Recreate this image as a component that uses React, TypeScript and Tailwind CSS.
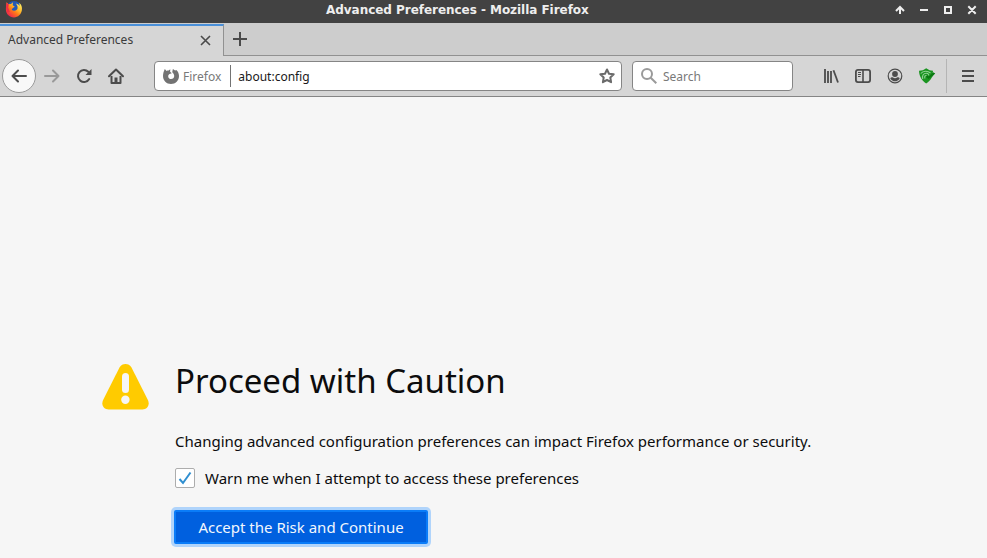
import type { ReactNode } from 'react';

function FirefoxLogo() {
  return (
    <svg width="18" height="18" viewBox="0 0 18 18">
      <defs>
        <linearGradient id="flame" x1="0.9" y1="0.05" x2="0.15" y2="0.9">
          <stop offset="0" stopColor="#fff36a" />
          <stop offset="0.35" stopColor="#ffbd2e" />
          <stop offset="0.6" stopColor="#ff7a18" />
          <stop offset="1" stopColor="#f0204f" />
        </linearGradient>
      </defs>
      <circle cx="9" cy="8.2" r="7.2" fill="#2458b8" />
      <path d="M1.6 2.2 3.8 4.4C4.6 3.9 5.3 3.9 6 4L7.9 2.3 7.7 5.3 9.8 6.8 7.8 8 6.7 9.8C8 11.2 10.3 11.2 12 9.6 13.3 7.7 12.5 5.2 10.8 3.4 13 3.8 14 4.8 14.7 6L14.2 2.8C16.5 4.8 17.3 7.3 16.9 10 16.3 14.4 13 17.4 9 17.4 4.2 17.4.9 13.6.9 9.4.8 6.6 1.6 5.3 1.6 2.2Z" fill="url(#flame)" />
      <path d="M1.6 2.4 3.8 4.5 3.2 7.7 4.8 11.9 2.5 12.5C.5 9.2.9 5.4 1.6 2.4Z" fill="#ef2d45" />
    </svg>
  );
}

function TitleBar() {
  return (
    <header className="relative flex h-[23px] shrink-0 items-start justify-between bg-[#424242] pl-[5px] pr-[10px]">
      <FirefoxLogo />
      <h1 className="absolute inset-x-0 top-px pl-[326px] text-[12px] leading-[19px] font-bold tracking-[-0.04px] whitespace-nowrap text-[#eeeeee] [font-family:'DejaVu_Sans',sans-serif]">
        Advanced Preferences - Mozilla Firefox
      </h1>
      <svg className="mt-[5px]" width="82" height="10" viewBox="0 0 82 10" fill="none" stroke="#eeeeee" strokeWidth="2">
        <path d="M5 9V2M1 6 5 2 9 6" />
        <path d="M25 5H33M50 2H56V8H50ZM73.3 1.3 80.7 8.7M80.7 1.3 73.3 8.7" />
      </svg>
    </header>
  );
}

function TabStrip() {
  return (
    <div className="flex h-[33px] shrink-0 bg-[#cdcdcd]">
      <div className="mt-px flex w-[224px] items-center justify-between border-t-2 border-r border-t-[#4a90d9] border-r-[#919191] bg-[#d6d6d6] pr-[12px] pb-[2px] pl-2">
        <span className="text-[12px] leading-4 text-[#3b3b3b]">Advanced Preferences</span>
        <svg width="11" height="11" viewBox="0 0 11 11" stroke="#4a4a4a" strokeWidth="1.6">
          <path d="M1 1 10 10M10 1 1 10" />
        </svg>
      </div>
      <div className="flex flex-1 items-start border-b border-[#919191] pt-[9px] pl-[9px]">
        <svg width="14" height="14" viewBox="0 0 14 14" stroke="#4a4a4a" strokeWidth="2">
          <path d="M7 0V14M0 7H14" />
        </svg>
      </div>
    </div>
  );
}

function Glyph({ children, color = '#4c4c4c' }: { children: ReactNode; color?: string }) {
  return (
    <svg width="16" height="16" viewBox="0 0 16 16" fill="none" stroke={color} strokeWidth="2" className="shrink-0 overflow-visible">
      {children}
    </svg>
  );
}

function Toolbar() {
  return (
    <div className="flex h-[41px] shrink-0 items-center border-b border-[#858585] bg-[#d6d6d6] pl-[2px]">
      <button className="flex size-[34px] shrink-0 items-center justify-center rounded-full border border-[#9a9a9a] bg-[#f8f8f8]">
        <Glyph><path d="M15 8H1.5M7 2.5 1.5 8 7 13.5" strokeLinecap="round" strokeLinejoin="round" /></Glyph>
      </button>
      <div className="ml-2 flex gap-4">
        <Glyph color="#999999"><path d="M1 8H14.5M9 2.5 14.5 8 9 13.5" strokeLinecap="round" strokeLinejoin="round" /></Glyph>
        <Glyph>
          <path d="M13.2 11A6 6 0 1 1 12.3 3.8" strokeLinecap="round" />
          <path d="M15.5 1V7H9.5Z" fill="#4c4c4c" stroke="none" />
        </Glyph>
        <Glyph>
          <path d="M1 8.3 8 1.5 15 8.3" strokeLinecap="round" strokeLinejoin="round" />
          <path d="M3.5 8V15H12.5V8" strokeLinejoin="round" />
          <path d="M8 15V9.5" strokeWidth="3" />
        </Glyph>
      </div>
      <div className="ml-[30px] flex h-[30px] w-[468px] shrink-0 items-center rounded-[4px] border border-[#858585] bg-white pr-[6px] pl-2 text-[12px]">
        <svg width="16" height="16" viewBox="0 0 16 16" fill="#737373">
          <path fillRule="evenodd" d="M1.8.9 3.6 2.9C4.2 2.5 5 2.4 5.6 2.5L7.3 1.2 7.1 3.7 8.8 5.2 6.5 6.1C5.7 6.5 5.2 7.4 5.2 8.2 5.2 9.9 6.5 11.1 8.1 11.1 9.9 11.1 11.2 9.8 11.2 8 11.2 6.4 10.4 5.2 9.2 4.2L9.9.9 12.1 2.5 13.3 1.9C15.2 3.4 16 5.8 16 8 16 12.5 12.5 16 8 16 3.5 16 0 12.5 0 8 0 5.2.8 3.2 1.8.9Z" />
        </svg>
        <span className="ml-1 pt-[2px] text-[#797979]">Firefox</span>
        <span className="ml-[9px] h-[22px] w-px bg-[#737373]" />
        <span className="ml-[7px] flex-1 pt-[2px] text-[#191919]">about:config</span>
        <Glyph color="#6b6b6b"><path d="M8 1.5 10 5.7 14.7 6.3 11.3 9.5 12.1 14.2 8 12 3.9 14.2 4.7 9.5 1.3 6.3 6 5.7Z" strokeLinejoin="round" /></Glyph>
      </div>
      <div className="ml-[10px] flex h-[30px] w-[161px] shrink-0 items-center rounded-[4px] border border-[#858585] bg-white pl-2 text-[12px] text-[#797979]">
        <Glyph color="#9a9a9a"><circle cx="6" cy="6" r="5" /><path d="M9.7 9.7 15.3 15.3" /></Glyph>
        <span className="ml-[6px] pt-[2px]">Search</span>
      </div>
      <div className="ml-[30px] flex gap-4">
        <Glyph>
          <path d="M2 1V15M5 3V15M8 3V15" strokeWidth="1.8" />
          <path d="M10.5 2.3 15 14.5" strokeWidth="1.8" />
        </Glyph>
        <Glyph>
          <rect x=".9" y="1.9" width="14.2" height="12.2" rx="2" strokeWidth="1.8" />
          <path d="M8 2V14" strokeWidth="1.6" />
          <path d="M3 4.5H6M3 6.5H6M3 8.5H5.5" strokeWidth="1" />
        </Glyph>
        <Glyph>
          <circle cx="8" cy="8" r="6.8" strokeWidth="1.2" />
          <g fill="#4c4c4c" stroke="none"><circle cx="8" cy="6" r="2.9" /><path d="M3.3 10.5C4.3 8.9 5.5 9.4 6 9.5 7.2 10.4 8.8 10.4 10 9.5 10.5 9.4 11.7 8.9 12.7 10.5 11.5 12.4 9.9 13.3 8 13.3S4.5 12.4 3.3 10.5Z" /></g>
        </Glyph>
        <Glyph>
          <path d="M0 2.8C3 2.8 5 2 7.2.3 9.5 2 11.6 2.8 14 2.8L13.8 5 16.2 5 12.8 9.6C11.6 12 9.6 14 7.2 15.5 3.3 12.8.2 9 0 2.8Z" fill="#1a9420" stroke="none" />
          <path d="M1.8 5.5C4.2 2.7 8.5 2.4 11.5 5M3.8 11C2.7 7.5 4.6 5.2 7.4 5.3 9.2 5.5 10 6.6 9.8 7.5M6 10.5C5.2 8.3 6 7.4 7.6 7.6" stroke="#8fd192" strokeWidth="1.1" />
          <path d="M7.5 8 9.6 9.7 15.3 5" stroke="#0b7812" strokeWidth="2" />
        </Glyph>
      </div>
      <div className="ml-[11px] h-[34px] w-px shrink-0 bg-[#b5b5b5]" />
      <div className="ml-[13px]"><Glyph><path d="M2 3H14M2 8H14M2 13H14" /></Glyph></div>
    </div>
  );
}

function WarningIcon() {
  return (
    <svg className="mt-[2px] shrink-0" width="47" height="47" viewBox="0 0 47 47">
      <path d="M17.5 4.4C20-.2 27-.2 29.5 4.4L45.9 37C48.1 41.6 45.4 46.5 40.3 46.5H6.7C1.6 46.5-1.1 41.6 1.1 37Z" fill="#ffcb00" />
      <rect x="20" y="10" width="7" height="20" rx="3.5" fill="#f6f6f6" />
      <circle cx="23.4" cy="36.7" r="4.2" fill="#f6f6f6" />
    </svg>
  );
}

export default function App() {
  return (
    <div className="flex h-[558px] w-[987px] flex-col overflow-hidden bg-[#f6f6f6] [font-family:'Noto_Sans',sans-serif]">
      <TitleBar />
      <TabStrip />
      <Toolbar />
      <main className="flex flex-1 items-start pt-[264px] pl-[102px] text-[15px] text-[#0c0c0d]">
        <WarningIcon />
        <section className="ml-[26px] flex flex-col items-start whitespace-nowrap">
          <h2 className="text-[33px] leading-[40px]">Proceed with Caution</h2>
          <p className="mt-[30px] leading-5">Changing advanced configuration preferences can impact Firefox performance or security.</p>
          <label className="mt-[17px] flex items-center leading-5">
            <span className="flex size-5 items-center justify-center rounded-[2px] border border-[#adadad] bg-white">
              <svg width="14" height="14" viewBox="0 0 14 14" fill="none" stroke="#2f8fd0" strokeWidth="2">
                <path d="M1.5 8 5 12 12.5 1.5" />
              </svg>
            </span>
            <span className="ml-[10px]">Warn me when I attempt to access these preferences</span>
          </label>
          <button className="mt-[22px] -ml-px flex h-[34px] w-[254px] items-center justify-center rounded-[2px] border-2 border-[#0a7cf8] bg-[#0060df] text-[#f2f7fd] shadow-[0_0_0_3px_#b0d4fb]">
            Accept the Risk and Continue
          </button>
        </section>
      </main>
    </div>
  );
}
